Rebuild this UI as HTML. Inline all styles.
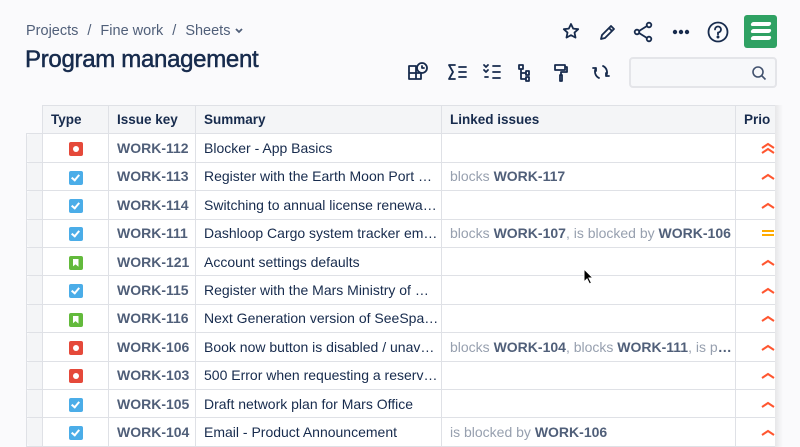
<!DOCTYPE html>
<html><head><meta charset="utf-8"><style>
*{box-sizing:border-box;margin:0;padding:0}
body{width:800px;height:447px;overflow:hidden;background:#fafafc;font-family:"Liberation Sans",sans-serif;color:#172b4d;position:relative}
.bc{position:absolute;left:26px;top:23px;font-size:14.5px;color:#505f79}
.bc span{margin:0 9px}
h1{position:absolute;left:25px;top:46px;font-size:24px;font-weight:normal;letter-spacing:-0.3px;color:#172b4d;-webkit-text-stroke:0.5px #172b4d}
.ic{position:absolute}
.logo{position:absolute;left:744px;top:15px;width:33px;height:33px;background:#2fa163;border-radius:3px}
.logo i{position:absolute;left:7px;width:20px;height:4px;background:#fff;border-radius:2px;transform:skewX(-20deg)}
.search{position:absolute;left:629px;top:57px;width:148px;height:31px;border:2px solid #e4e5e9;border-radius:4px;background:#f7f8fa}
table{position:absolute;left:26px;top:105px;border-collapse:collapse;font-size:14px;table-layout:fixed;width:754px}
td,th{border:1px solid #dfe1e6;height:28.4px;padding:0 8px;white-space:nowrap;overflow:hidden;text-align:left}
th{font-weight:bold;background:#f4f5f7;color:#172b4d;font-size:13.5px}
th.g{background:#fafafc;border:none;border-bottom:1px solid #dfe1e6}
td.g{background:#f4f5f7;border-radius:4px 0 0 4px;padding:0}
td{background:#fff}
.k{color:#505f79;font-weight:bold}
.l{color:#97a0af}.l b{color:#505f79}
.t{display:inline-block;width:14px;height:14px;border-radius:2px;vertical-align:middle;position:relative}
.bug{background:#e5493a}.bug:after{content:"";position:absolute;left:4px;top:4px;width:6px;height:6px;border-radius:50%;background:#fff}
.task{background:#4bade8}.task:after{content:"";position:absolute;left:4px;top:2px;width:3px;height:6px;border:solid #fff;border-width:0 2px 2px 0;transform:rotate(40deg)}
.story{background:#63ba3c}.story:after{content:"";position:absolute;left:4px;top:3px;width:6px;height:8px;background:#fff;clip-path:polygon(0 0,100% 0,100% 100%,50% 70%,0 100%)}
.p{padding:0 0 0 24px}
.p svg{display:block}
.shadow{position:absolute;left:775px;top:105px;width:25px;height:342px;background:linear-gradient(90deg,rgba(0,0,0,.08),rgba(0,0,0,0) 8px),#fafafc}
</style></head><body>
<div class="bc">Projects<span>/</span>Fine work<span>/</span>Sheets <svg width="10" height="8" viewBox="0 0 10 8"><path d="M2 2l3 3 3-3" stroke="#505f79" stroke-width="1.8" fill="none"/></svg></div>
<h1>Program management</h1>
<svg class="ic" style="left:560px;top:20px" width="180" height="24" viewBox="0 0 180 24" fill="none" stroke="#172b4d" stroke-width="1.8" stroke-linecap="round" stroke-linejoin="round">
<path d="M11 4l2.2 4.6 5 .6-3.7 3.4 1 5-4.5-2.5-4.5 2.5 1-5-3.7-3.4 5-.6z"/>
<path d="M41 19l1-4 9-9 3 3-9 9z M49 8l3 3"/>
<circle cx="77" cy="12" r="2.3"/><circle cx="89" cy="5" r="2.3"/><circle cx="89" cy="19" r="2.3"/><path d="M79 11l8-5M79 13l8 5"/>
<circle cx="115" cy="12" r="1.3" fill="#172b4d"/><circle cx="121" cy="12" r="1.3" fill="#172b4d"/><circle cx="127" cy="12" r="1.3" fill="#172b4d"/>
<circle cx="158" cy="12" r="9.5"/><path d="M155 9.5a3 3 0 1 1 3 3v2"/><circle cx="158" cy="17" r=".6" fill="#172b4d"/>
</svg>
<div class="logo"><i style="top:7px"></i><i style="top:14px"></i><i style="top:21px"></i></div>
<svg class="ic" style="left:405px;top:60px" width="215" height="24" viewBox="0 0 215 24" fill="none" stroke="#172b4d" stroke-width="1.8" stroke-linecap="round" stroke-linejoin="round">
<path d="M4 6h7v13H4zM4 13h12v6h-5"/><circle cx="17" cy="8" r="5"/><path d="M17 6v2h2"/>
<path d="M50 5h-6l4 7-4 7h6M54 7h7M54 12h7M54 17h7"/>
<path d="M79 5l2 2 2-2M79 10l2 2 2-2M88 6h7M88 12h7M88 18h7M80 17h3"/>
<path d="M114 5h4v4h-4zM116 9v10h4M116 13h4M121 11h3v4h-3zM121 17h3v4h-3z"/>
<path d="M150 5h10v5h-10zM160 7h2v5h-6v3M155 15h2v6h-2z"/>
<path d="M198 6a7 7 0 0 1 3 10M201 13v3h3M194 18a7 7 0 0 1-3-10M191 11V8h-3"/>
</svg>
<div class="search"><svg style="position:absolute;right:8px;top:6px" width="16" height="16" viewBox="0 0 16 16" fill="none" stroke="#42526e" stroke-width="1.6"><circle cx="7" cy="7" r="5"/><path d="M11 11l3.5 3.5"/></svg></div>
<table>
<colgroup><col style="width:16px"><col style="width:66px"><col style="width:87px"><col style="width:246px"><col style="width:294px"><col style="width:45px"></colgroup>
<tr><th class="g"></th><th>Type</th><th>Issue key</th><th>Summary</th><th>Linked issues</th><th>Prio</th></tr>
<tr><td class="g"></td><td style="text-align:center"><span class="t bug"></span></td><td class="k">WORK-112</td><td>Blocker - App Basics</td><td></td><td class="p"><svg width="16" height="12" viewBox="0 0 16 12" fill="none" stroke="#ff5630" stroke-width="2"><path d="M2 6l6-4 6 4M2 11l6-4 6 4"/></svg></td></tr>
<tr><td class="g"></td><td style="text-align:center"><span class="t task"></span></td><td class="k">WORK-113</td><td>Register with the Earth Moon Port …</td><td class="l">blocks <b>WORK-117</b></td><td class="p"><svg width="16" height="8" viewBox="0 0 16 8" fill="none" stroke="#ff5630" stroke-width="2"><path d="M2 7l6-4 6 4"/></svg></td></tr>
<tr><td class="g"></td><td style="text-align:center"><span class="t task"></span></td><td class="k">WORK-114</td><td>Switching to annual license renewa…</td><td></td><td class="p"><svg width="16" height="8" viewBox="0 0 16 8" fill="none" stroke="#ff5630" stroke-width="2"><path d="M2 7l6-4 6 4"/></svg></td></tr>
<tr><td class="g"></td><td style="text-align:center"><span class="t task"></span></td><td class="k">WORK-111</td><td>Dashloop Cargo system tracker em…</td><td class="l">blocks <b>WORK-107</b>, is blocked by <b>WORK-106</b></td><td class="p"><svg width="16" height="10" viewBox="0 0 16 10" fill="none" stroke="#ffab00" stroke-width="2"><path d="M2 3h12M2 7h12"/></svg></td></tr>
<tr><td class="g"></td><td style="text-align:center"><span class="t story"></span></td><td class="k">WORK-121</td><td>Account settings defaults</td><td></td><td class="p"><svg width="16" height="8" viewBox="0 0 16 8" fill="none" stroke="#ff5630" stroke-width="2"><path d="M2 7l6-4 6 4"/></svg></td></tr>
<tr><td class="g"></td><td style="text-align:center"><span class="t task"></span></td><td class="k">WORK-115</td><td>Register with the Mars Ministry of …</td><td></td><td class="p"><svg width="16" height="8" viewBox="0 0 16 8" fill="none" stroke="#ff5630" stroke-width="2"><path d="M2 7l6-4 6 4"/></svg></td></tr>
<tr><td class="g"></td><td style="text-align:center"><span class="t story"></span></td><td class="k">WORK-116</td><td>Next Generation version of SeeSpa…</td><td></td><td class="p"><svg width="16" height="8" viewBox="0 0 16 8" fill="none" stroke="#ff5630" stroke-width="2"><path d="M2 7l6-4 6 4"/></svg></td></tr>
<tr><td class="g"></td><td style="text-align:center"><span class="t bug"></span></td><td class="k">WORK-106</td><td>Book now button is disabled / unav…</td><td class="l">blocks <b>WORK-104</b>, blocks <b>WORK-111</b>, is p<b>…</b></td><td class="p"><svg width="16" height="8" viewBox="0 0 16 8" fill="none" stroke="#ff5630" stroke-width="2"><path d="M2 7l6-4 6 4"/></svg></td></tr>
<tr><td class="g"></td><td style="text-align:center"><span class="t bug"></span></td><td class="k">WORK-103</td><td>500 Error when requesting a reserv…</td><td></td><td class="p"><svg width="16" height="8" viewBox="0 0 16 8" fill="none" stroke="#ff5630" stroke-width="2"><path d="M2 7l6-4 6 4"/></svg></td></tr>
<tr><td class="g"></td><td style="text-align:center"><span class="t task"></span></td><td class="k">WORK-105</td><td>Draft network plan for Mars Office</td><td></td><td class="p"><svg width="16" height="8" viewBox="0 0 16 8" fill="none" stroke="#ff5630" stroke-width="2"><path d="M2 7l6-4 6 4"/></svg></td></tr>
<tr><td class="g"></td><td style="text-align:center"><span class="t task"></span></td><td class="k">WORK-104</td><td>Email - Product Announcement</td><td class="l">is blocked by <b>WORK-106</b></td><td class="p"><svg width="16" height="8" viewBox="0 0 16 8" fill="none" stroke="#ff5630" stroke-width="2"><path d="M2 7l6-4 6 4"/></svg></td></tr>
</table>
<div class="shadow"></div>
<svg class="ic" style="left:583px;top:268px" width="12" height="18" viewBox="0 0 12 18"><path d="M1 1v13l3-3 2.5 5 2-1-2.5-5h4z" fill="#000" stroke="#fff" stroke-width="1"/></svg>
</body></html>
